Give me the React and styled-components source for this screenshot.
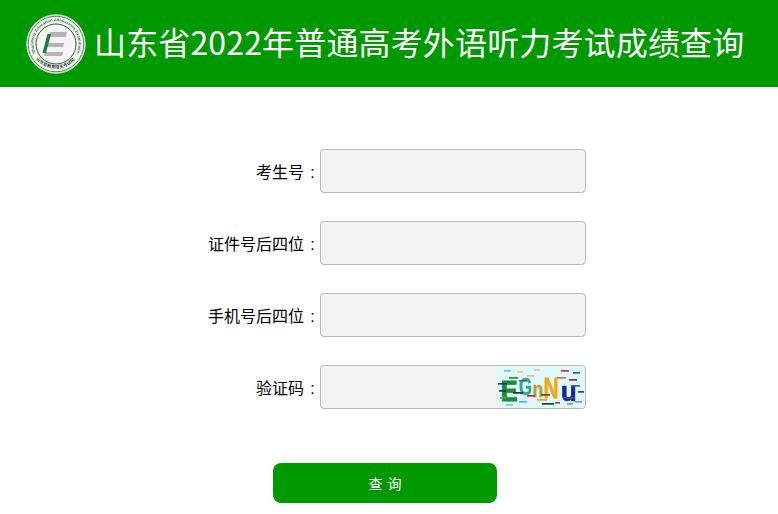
import React from "react";
import styled, { createGlobalStyle } from "styled-components";

const GlobalStyle = createGlobalStyle`
  html, body {
    margin: 0;
    padding: 0;
    background: #fff;
    font-family: "Noto Sans CJK SC", "Liberation Sans", sans-serif;
  }
`;

const Header = styled.header`
  height: 87px;
  background: #009900;
  display: flex;
  align-items: center;
  padding-left: 26px;
  gap: 8px;
`;

const Title = styled.h1`
  margin: 0 0 4px;
  font-size: 32px;
  font-weight: 400;
  line-height: 83px;
  letter-spacing: 0.15px;
  color: #fff;
  white-space: nowrap;
  font-family: "Noto Sans CJK SC", sans-serif;
`;

const Form = styled.form`
  display: flex;
  flex-direction: column;
  padding-top: 62px;
`;

const Row = styled.div`
  display: flex;
  align-items: center;
  height: 44px;
  margin-bottom: 28px;
`;

const Label = styled.label`
  width: 320px;
  height: 44px;
  display: flex;
  justify-content: flex-end;
  font-size: 16px;
  line-height: 44px;
  color: #000;
  white-space: nowrap;
`;

const Colon = styled.span`
  width: 16px;
  height: 44px;
  line-height: 48px;
  font-family: "Liberation Sans", sans-serif;
  text-align: center;
  padding-left: 1px;
  box-sizing: border-box;
`;

const InputWrap = styled.div`
  position: relative;
  width: 266px;
  height: 44px;
`;

const Input = styled.input`
  box-sizing: border-box;
  width: 100%;
  height: 100%;
  background: #f3f3f3;
  border: 1px solid #b8b8b8;
  border-radius: 4px;
  outline: none;
`;

const Captcha = styled.svg`
  position: absolute;
  top: 1px;
  right: 1px;
  border-radius: 0 3px 3px 0;
`;

const Submit = styled.button`
  display: block;
  width: 224px;
  height: 40px;
  margin: 26px 0 0 273px;
  border: 0;
  border-radius: 8px;
  background: #009900;
  color: #fff;
  font-family: "Noto Sans CJK SC", sans-serif;
  font-size: 14px;
  letter-spacing: 5px;
  text-indent: 5px;
`;

const dashes = [
  [7, 4, 7, "#70c8c8"], [20, 5, 6, "#e8d080"], [37, 3, 6, "#c8d8a0"], [64, 4, 8, "#c03060"],
  [76, 6, 7, "#2a6a9a"], [12, 11, 9, "#2a8a5a"], [30, 9, 7, "#e0c080"], [60, 11, 9, "#c08030"],
  [72, 13, 8, "#8a2a6a"], [1, 17, 9, "#203a80"], [22, 14, 8, "#4a6a90"], [74, 19, 9, "#2a6a9a"],
  [2, 24, 7, "#283848"], [81, 25, 6, "#404a5a"], [16, 26, 10, "#203040"], [30, 29, 8, "#c03040"],
  [3, 31, 6, "#50a070"], [44, 28, 9, "#6a4a2a"], [66, 31, 12, "#3050a0"], [22, 35, 8, "#60b0c0"],
  [40, 33, 10, "#e0a030"], [45, 37, 12, "#303050"], [58, 36, 5, "#b04050"], [70, 37, 6, "#60a0c0"],
  [9, 38, 7, "#90c8b0"], [78, 35, 7, "#70a8c0"],
];

const letters = [
  { x: 4, y: 35, size: 29, fill: "#1c8a38", ch: "E", sx: 0.86, w: 1.1 },
  { x: 22, y: 29, size: 24, fill: "#2fa890", ch: "G", sx: 0.7, w: 0.4 },
  { x: 35.5, y: 31, size: 22, fill: "#b8a040", ch: "n", sx: 0.8, w: 0.4 },
  { x: 46.5, y: 32, size: 29, fill: "#f2a81c", ch: "N", sx: 0.72, w: 0.8 },
  { x: 64, y: 35, size: 27, fill: "#18249a", ch: "u", sx: 0.95, w: 0.7 },
];

const CaptchaImage = () => (
  <Captcha width="88" height="42" viewBox="0 0 88 42">
    <defs>
      <filter id="soft">
        <feGaussianBlur stdDeviation="0.5" />
      </filter>
    </defs>
    <rect width="88" height="42" fill="#dff8f8" />
    <g filter="url(#soft)">
      {letters.map((l) => (
        <text
          key={l.ch}
          transform={`translate(${l.x} ${l.y}) scale(${l.sx} 1)`}
          fontFamily="Liberation Sans, sans-serif"
          fontWeight="700"
          fontSize={l.size}
          fill={l.fill}
          stroke={l.fill}
          strokeWidth={l.w}
        >
          {l.ch}
        </text>
      ))}
      {dashes.map(([x, y, w, c], i) => (
        <rect key={i} x={x} y={y} width={w} height="1.7" fill={c} />
      ))}
    </g>
  </Captcha>
);

const Logo = () => (
  <svg width="60" height="60" viewBox="0 0 60 60" overflow="visible">
    <defs>
      <path id="ringTop" d="M9.4 39 A22.6 22.6 0 1 1 50.6 39" />
      <path id="ringBottom" d="M6.5 38 A25 25 0 0 0 53.5 38" />
      <filter id="logoSoft">
        <feGaussianBlur stdDeviation="0.25" />
      </filter>
    </defs>
    <g filter="url(#logoSoft)">
      <circle cx="30" cy="30" r="29.3" fill="#f2f2f2" stroke="#c4d6c4" strokeWidth="1" />
      <circle cx="30" cy="30" r="27.8" fill="none" stroke="#2f6b3a" strokeWidth="0.8" />
      <circle cx="30" cy="30" r="20" fill="#f5f5f5" stroke="#1f6a2c" strokeWidth="1" />
      <text fontSize="3.7" fontFamily="Liberation Sans, sans-serif" fontWeight="700" fill="#3f6a4c">
        <textPath href="#ringTop" textLength="92" lengthAdjust="spacingAndGlyphs">Shandong Education Admissions Examination</textPath>
      </text>
      <text fontSize="4.2" fontFamily="Noto Sans CJK SC, sans-serif" fontWeight="700" fill="#2d3a30" letterSpacing="0.5">
        <textPath href="#ringBottom" startOffset="13%" textLength="44">山东省教育招生考试院</textPath>
      </text>
      <polygon points="24,18 41,18 40,23 23,23" fill="#b4b4b4" />
      <polygon points="21,29 38,29 37.5,33 20,33" fill="#b4b4b4" />
      <polygon points="19,38 37,38 36,42 18,42" fill="#b4b4b4" />
      <polygon points="21.5,20 25,20 20,39 16.5,39" fill="#1f7a34" />
    </g>
  </svg>
);

export default function App() {
  const fields = [
    { id: "ksh", label: "考生号" },
    { id: "zjh", label: "证件号后四位" },
    { id: "sjh", label: "手机号后四位" },
    { id: "yzm", label: "验证码", captcha: true },
  ];

  return (
    <>
      <GlobalStyle />
      <Header>
        <Logo />
        <Title>山东省2022年普通高考外语听力考试成绩查询</Title>
      </Header>
      <Form onSubmit={(e) => e.preventDefault()}>
        {fields.map((f) => (
          <Row key={f.id}>
            <Label htmlFor={f.id}>
              {f.label}
              <Colon>:</Colon>
            </Label>
            <InputWrap>
              <Input id={f.id} type="text" />
              {f.captcha && <CaptchaImage />}
            </InputWrap>
          </Row>
        ))}
        <Submit type="submit">查询</Submit>
      </Form>
    </>
  );
}
